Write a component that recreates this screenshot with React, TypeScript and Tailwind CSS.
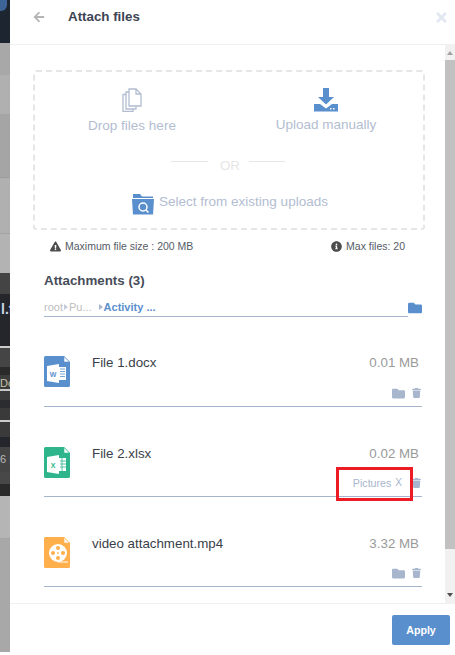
import React from 'react';
import { FaArrowLeft, FaExclamationTriangle, FaFolder, FaInfoCircle, FaTrash, FaTimes } from 'react-icons/fa';

const DocIcon = ({ color, children }: { color: string; children: React.ReactNode }) => (
  <svg width="26" height="31" viewBox="0 0 26 31" className="shrink-0">
    <path d="M1.5 0H20L26 6V29.500A1.500 1.500 0 0 1 24.500 31H1.500A1.500 1.500 0 0 1 0 29.500V1.500A1.500 1.500 0 0 1 1.500 0Z" fill={color} />
    <path d="M20 0.500L25.500 6H20Z" fill="#fff" stroke={color} strokeWidth="0.6" />
    {children}
  </svg>
);

const WordGlyph = () => (
  <g>
    <path d="M3 10L15 8V27L3 25Z" fill="#fff" />
    <rect x="15" y="11" width="7" height="13" fill="#fff" />
    <path d="M16 13H21M16 15.500H21M16 18H21M16 20.500H21" stroke="#5a8fcd" strokeWidth="0.8" />
    <text x="9" y="21" fontSize="7" fontWeight="700" textAnchor="middle" fill="#5a8fcd" fontFamily="Liberation Sans, sans-serif">W</text>
  </g>
);

const ExcelGlyph = () => (
  <g>
    <path d="M3 10L15 8V27L3 25Z" fill="#fff" />
    <rect x="15" y="11" width="7" height="13" fill="#fff" />
    <path d="M16 14H22M16 17H22M16 20H22M18 11V24" stroke="#2fb58c" strokeWidth="0.8" />
    <text x="9" y="21" fontSize="7" fontWeight="700" textAnchor="middle" fill="#2fb58c" fontFamily="Liberation Sans, sans-serif">X</text>
  </g>
);

const VideoGlyph = () => (
  <g>
    <circle cx="14" cy="16" r="9" fill="#fff" />
    <path d="M14 25H24" stroke="#fff" strokeWidth="1" />
    <circle cx="14" cy="11" r="2" fill="#ffb04c" />
    <circle cx="14" cy="21" r="2" fill="#ffb04c" />
    <circle cx="9" cy="16" r="2" fill="#ffb04c" />
    <circle cx="19" cy="16" r="2" fill="#ffb04c" />
    <circle cx="14" cy="16" r="0.900" fill="#ffb04c" />
  </g>
);

const files = [
  { name: 'File 1.docx', size: '0.01 MB', color: '#5a8fcd', glyph: <WordGlyph />, tagged: false },
  { name: 'File 2.xlsx', size: '0.02 MB', color: '#2fb58c', glyph: <ExcelGlyph />, tagged: true },
  { name: 'video attachment.mp4', size: '3.32 MB', color: '#ffb04c', glyph: <VideoGlyph />, tagged: false },
];

// the page behind the panel, only its left edge shows
const BackdropStrip = () => (
  <div className="w-[10px] shrink-0 h-[652px] flex flex-col overflow-hidden">
    <div className="h-[43px] bg-[#1c2530]">
      <div className="w-[7px] h-[11px] bg-[#3c6496] rounded-br-[6px]" />
    </div>
    <div className="h-[32px] bg-[#a8a8a8]" />
    <div className="h-[39px] bg-[#b0b0b0]" />
    <div className="h-[64px] bg-[#a5a5a5] border-b border-[#9c9c9c]" />
    <div className="h-[56px] bg-[#b0b0b0] border-b border-[#a2a2a2]" />
    <div className="h-[39px] bg-[#b3b3b3]" />
    <div className="h-[21px] bg-[#444444]" />
    <div className="h-[52px] bg-[#24262c] pt-[7px] pl-[1px] text-[14px] leading-[16px] font-bold text-[#c9d6e8] whitespace-nowrap">l.f</div>
    <div className="h-[2px] bg-[#cccccc]" />
    <div className="h-[19px] bg-[#454545]" />
    <div className="h-[8px] bg-[#2a2a2a]" />
    <div className="h-[14px] bg-[#3c3c3c] pt-[3px] text-[11px] leading-[11px] text-[#c8c2a8] whitespace-nowrap">Do</div>
    <div className="h-[2px] bg-[#c8c8c8]" />
    <div className="h-[9px] bg-[#3a3a3a]" />
    <div className="h-[8px] bg-[#2a2c30]" />
    <div className="h-[12px] bg-[#3a3a3a]" />
    <div className="h-[2px] bg-[#cccccc]" />
    <div className="h-[15px] bg-[#3a3a3a]" />
    <div className="h-[10px] bg-[#24262c]" />
    <div className="h-[25px] bg-[#444444] pt-[5px] text-[11px] leading-[14px] text-[#b9b9b9] whitespace-nowrap">6 P</div>
    <div className="h-[12px] bg-[#484848]" />
    <div className="h-[12px] bg-[#2a2a2a]" />
    <div className="h-[43px] bg-[#b5b5b5] border-b border-[#a4a4a4]" />
    <div className="flex-1 bg-[#a8a8a8]" />
  </div>
);

const App = () => {
  return (
    <div className="relative flex w-[455px] h-[655px] overflow-hidden bg-white font-['Liberation_Sans',Arial,sans-serif]">
      <BackdropStrip />

      <div className="flex-1 flex flex-col min-w-0 h-[652px]">
        {/* Header */}
        <div className="h-[45px] shrink-0 border-b border-[#f0f0f0] flex items-center pl-[23px] pr-[6px] pb-[10px]">
          <FaArrowLeft className="text-[#b5b5b5] text-[12px] w-[12px]" />
          <span className="ml-[23px] text-[13.33px] font-bold text-[#3d4453]">Attach files</span>
          <FaTimes className="ml-auto text-[#e3e7f1] text-[15px]" />
        </div>

        {/* Body */}
        <div className="flex-1 flex min-h-0">
          <div className="flex-1 min-w-0 pt-[25px] pl-[23px] pr-[20px]">
            <div className="h-[160px] border-2 border-dashed border-[#e6e6e6] rounded-[3px] flex flex-col">
              <div className="flex pt-[16px] h-[88px]">
                <div className="w-[194px] flex flex-col items-center text-[#b3bdd1] text-[13.5px]">
                  <svg width="20" height="24" viewBox="0 0 20 24" fill="none" stroke="#b3bdd1" strokeWidth="1.300">
                    <path d="M7 1H14L19 6V18H7Z" />
                    <path d="M14 1V6H19" />
                    <path d="M7 4H4V21H14V18" />
                    <path d="M4 6.500H1V23.500H11V21" />
                  </svg>
                  <span className="mt-[5px] leading-[18px]">Drop files here</span>
                </div>
                <div className="w-[194px] flex flex-col items-center text-[#b3bdd1] text-[13.5px]">
                  <svg width="24" height="24" viewBox="0 0 24 24">
                    <path d="M9 0H15V9H20L12 16.500L4 9H9Z" fill="#5a8fcd" />
                    <path d="M0 16H6L12 20.500L18 16H24V23.500H0Z" fill="#5a8fcd" />
                    <rect x="16" y="20" width="1.500" height="1.500" fill="#fff" />
                    <rect x="19" y="20" width="1.500" height="1.500" fill="#fff" />
                  </svg>
                  <span className="mt-[4px] leading-[18px]">Upload manually</span>
                </div>
              </div>
              <div className="flex items-start justify-center pr-[2px] h-[30px]">
                <div className="w-[37px] h-px bg-[#e6e6e6] mt-[1px]" />
                <span className="ml-[12px] mr-[9px] text-[13.33px] leading-[18px] text-[#e6e6e6] mt-[-3px]">OR</span>
                <div className="w-[36px] h-px bg-[#e6e6e6] mt-[1px]" />
              </div>
              <div className="flex items-center justify-center pl-[2px] text-[#b3bdd1] text-[13.5px]">
                <svg width="22" height="21" viewBox="0 0 22 21" className="mr-[5px] mt-[4px]">
                  <path d="M1 0H8L10 2.500H21V4H1Z" fill="#5a8fcd" />
                  <path d="M0 5H22L21 20.500H1Z" fill="#5a8fcd" />
                  <circle cx="11" cy="13" r="4" fill="none" stroke="#fff" strokeWidth="1.500" />
                  <path d="M14 16L16.500 18.500" stroke="#fff" strokeWidth="1.500" />
                </svg>
                <span>Select from existing uploads</span>
              </div>
            </div>

            <div className="flex justify-between pl-[17px] pr-[20px] mt-[9px] text-[10.5px] leading-[14px] text-[#555b66]">
              <span className="flex items-center gap-[4px]">
                <FaExclamationTriangle className="text-[#4c4c4c] text-[11px]" />
                Maximum file size : 200 MB
              </span>
              <span className="flex items-center gap-[4px]">
                <FaInfoCircle className="text-[#4c4c4c] text-[11px]" />
                Max files: 20
              </span>
            </div>

            <div className="ml-[11px] mr-[3px]">
              <div className="mt-[20px] text-[13.33px] leading-[16px] font-bold text-[#474c59]">Attachments (3)</div>
              <div className="flex items-end mt-[9px]">
                <div className="flex-1 h-[19px] border-b border-[#a5b3cb] flex items-center text-[11px] text-[#bdbdbd]">
                  <span>root</span>
                  <span className="w-0 h-0 mx-[1px] border-y-[3px] border-y-transparent border-l-[4px] border-l-[#c4cbd8]" />
                  <span>Pu...</span>
                  <span className="w-0 h-0 ml-[7px] mr-[1px] border-y-[3px] border-y-transparent border-l-[4px] border-l-[#a8b6cd]" />
                  <span className="font-bold text-[#5a8fcd]">Activity ...</span>
                </div>
                <FaFolder className="text-[#5a8fcd] text-[14px] mb-[2px]" />
              </div>

              <div className="pt-[39px] flex flex-col gap-[40px]">
                {files.map((f, i) => (
                  <div key={f.name} className={`border-b border-[#a5b3cb] flex ${i === 0 ? 'h-[51px]' : 'h-[50px]'}`}>
                    <DocIcon color={f.color}>{f.glyph}</DocIcon>
                    <span className="ml-[22px] -mt-[1px] h-[16px] text-[13.33px] leading-[16px] text-[#3a3f49]">{f.name}</span>
                    <div className="ml-auto flex flex-col items-end pr-[1px] -mt-[1px]">
                      <span className="text-[13.33px] leading-[16px] text-[#9a9a9a] mr-[2px]">{f.size}</span>
                      <div className={`flex items-center h-[12px] text-[#a8b6cd] ${i === 0 ? 'mt-[16px]' : 'mt-[15px]'}`}>
                        {f.tagged ? (
                          <span className="text-[10.67px] leading-[12px] mr-[10px] flex items-center">
                            Pictures<span className="ml-[4px] text-[10px]">X</span>
                          </span>
                        ) : (
                          <FaFolder className="text-[13px] mr-[7px]" />
                        )}
                        <FaTrash className="text-[10px] w-[9px]" />
                      </div>
                    </div>
                  </div>
                ))}
              </div>
            </div>
          </div>

          {/* Scrollbar */}
          <div className="w-[10px] shrink-0 bg-[#f1f1f1] flex flex-col items-center">
            <div className="h-[15px] flex items-center">
              <span className="w-0 h-0 border-x-[3px] border-x-transparent border-b-[4px] border-b-[#a3a3a3]" />
            </div>
            <div className="w-full h-[489px] bg-[#c1c1c1]" />
            <div className="flex-1 flex items-end pb-[6px]">
              <span className="w-0 h-0 border-x-[3px] border-x-transparent border-t-[4px] border-t-[#505050]" />
            </div>
          </div>
        </div>

        {/* Footer */}
        <div className="h-[49px] shrink-0 border-t border-[#f0f0f0] flex items-start justify-end pt-[11px] pr-[5px]">
          <button className="w-[58px] h-[30px] bg-[#5a8fcd] rounded-[2px] text-white text-[10.67px] font-bold">Apply</button>
        </div>
      </div>

      {/* red highlight drawn over the tag */}
      <div className="absolute left-[336px] top-[467px] w-[77px] h-[34px] border-[3px] border-[#ed1c24]" />
    </div>
  );
};

export default App;
